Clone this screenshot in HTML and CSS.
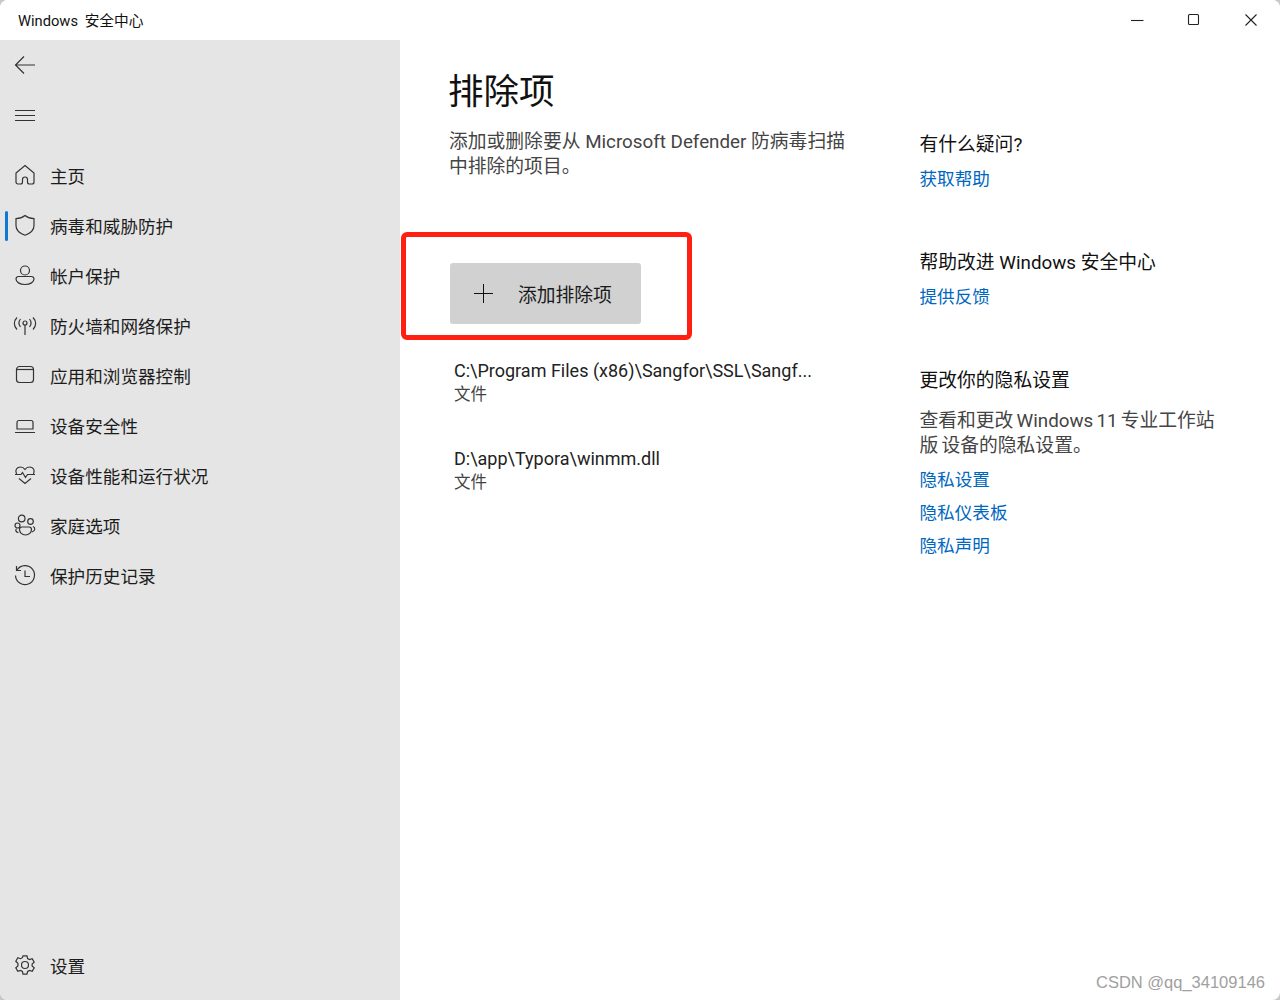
FILE: index.html
```html
<!DOCTYPE html>
<html lang="zh-CN">
<head>
<meta charset="utf-8">
<title>Windows 安全中心</title>
<link rel="stylesheet" href="styles.css">
</head>
<body>
<div class="window">
  <header class="titlebar">
    <span class="title">Windows 安全中心</span>
    <div class="controls">
      <svg class="ctl" viewBox="0 0 16 16"><path d="M2 8.500h12.500"/></svg>
      <svg class="ctl" viewBox="0 0 16 16"><rect x="2.500" y="2.500" width="10" height="10" rx="1"/></svg>
      <svg class="ctl" viewBox="0 0 16 16"><path d="M2.500 2.500l11 11M13.500 2.500l-11 11"/></svg>
    </div>
  </header>
  <div class="content">
    <nav class="sidebar">
      <div class="nav-tool"><svg class="ico" viewBox="0 0 24 24"><path d="M2.500 12h19.500M11 3.500L2.500 12l8.500 8.500"/></svg></div>
      <div class="nav-tool"><svg class="ico" viewBox="0 0 24 24"><path d="M2 7.500h20M2 12.500h20M2 17.500h20"/></svg></div>
      <ul class="nav-list">
        <li class="nav-item"><svg class="ico" viewBox="0 0 24 24"><path d="M12 1.500L21 9v9a2 2 0 0 1-2 2h-2.500a2 2 0 0 1-2-2v-2.500a2.500 2.500 0 0 0-5 0V18a2 2 0 0 1-2 2H5a2 2 0 0 1-2-2V9z"/></svg><span>主页</span></li>
        <li class="nav-item active"><svg class="ico" viewBox="0 0 24 24"><path d="M12 1.500c2.500 2 6 3.200 9 3.200v7c0 4.500-3.500 7.500-9 9.500-5.500-2-9-5-9-9.500v-7c3 0 6.500-1.200 9-3.200z"/></svg><span>病毒和威胁防护</span></li>
        <li class="nav-item"><svg class="ico" viewBox="0 0 24 24"><circle cx="12" cy="6.500" r="4.500"/><path d="M5.500 12.500h13a2.500 2.500 0 0 1 2.500 2.500c0 3-3.500 5.500-9 5.500S3 18 3 15a2.500 2.500 0 0 1 2.500-2.500z"/></svg><span>帐户保护</span></li>
        <li class="nav-item"><svg class="ico" viewBox="0 0 24 24"><circle cx="12" cy="9" r="2"/><path d="M12 11v10M7.500 5c-2 2.500-2 5.500 0 8M16.500 5c2 2.500 2 5.500 0 8M4 3.500c-3.500 3.500-3.500 8.500 0 12M20 3.500c3.500 3.500 3.500 8.500 0 12"/></svg><span>防火墙和网络保护</span></li>
        <li class="nav-item"><svg class="ico" viewBox="0 0 24 24"><rect x="3.500" y="2.500" width="17" height="16" rx="3"/><path d="M3.500 5.500h17"/></svg><span>应用和浏览器控制</span></li>
        <li class="nav-item"><svg class="ico" viewBox="0 0 24 24"><path d="M6 6.500h12a2 2 0 0 1 2 2V15H4V8.500a2 2 0 0 1 2-2zM2 18.500h20"/></svg><span>设备安全性</span></li>
        <li class="nav-item"><svg class="ico" viewBox="0 0 24 24"><path d="M3.500 10C1.500 6 4 3 7.500 3c2 0 3.500 1 4.500 2.500C13 4 14.500 3 16.500 3c3.500 0 6 3 4 7M2 10.500h6l1.500-2 3 5 2-3H22M6 14.500l6 5 6-5"/></svg><span>设备性能和运行状况</span></li>
        <li class="nav-item"><svg class="ico" viewBox="0 0 24 24"><circle cx="8.700" cy="4.500" r="3.300"/><circle cx="17.500" cy="7.500" r="2.800"/><circle cx="4.500" cy="11.500" r="2.500"/><path d="M9 13h7a2.500 2.500 0 0 1 2.500 2.500c0 3-2.500 5.500-6 5.500s-6-2.500-6-5.500A2.500 2.500 0 0 1 9 13zM3.500 15c-1.500 1-.5 3.500 2 3.500M20 12.500c2.500 1 2.500 4.500-1 5.500"/></svg><span>家庭选项</span></li>
        <li class="nav-item"><svg class="ico" viewBox="0 0 24 24"><path d="M4 6a9.500 9.500 0 1 1-1.500 5.500M3.500 2v4.500H8M12 6.500v6h5"/></svg><span>保护历史记录</span></li>
      </ul>
      <div class="nav-bottom">
        <div class="nav-item"><svg class="ico" viewBox="0 0 24 24"><circle cx="12" cy="11" r="3.500"/><path d="M10 1.800h4l.6 2.800 1.900 1 2.700-.9 2 3.500-2.100 1.900v1.800l2.100 1.900-2 3.500-2.700-.9-1.900 1-.6 2.800h-4l-.6-2.800-1.900-1-2.700.9-2-3.500 2.100-1.900V9.200L2.800 7.300l2-3.500 2.700.9 1.900-1z"/></svg><span>设置</span></div>
      </div>
    </nav>
    <main class="main">
      <section class="primary">
        <h1 class="page-title">排除项</h1>
        <p class="desc">添加或删除要从 Microsoft Defender 防病毒扫描中排除的项目。</p>
        <div class="add-wrap">
          <button class="add-btn"><svg class="plus" viewBox="0 0 20 20"><path d="M9.500 0v19M0 9.500h19"/></svg><span>添加排除项</span></button>
          <div class="highlight"></div>
        </div>
        <div class="entry entry-first"><div class="entry-path">C:\Program Files (x86)\Sangfor\SSL\Sangf...</div><div class="entry-type">文件</div></div>
        <div class="entry"><div class="entry-path">D:\app\Typora\winmm.dll</div><div class="entry-type">文件</div></div>
      </section>
      <aside class="side">
        <div class="side-block"><h2>有什么疑问?</h2><a>获取帮助</a></div>
        <div class="side-block"><h2>帮助改进 Windows 安全中心</h2><a>提供反馈</a></div>
        <div class="side-block"><h2>更改你的隐私设置</h2><p>查看和更改 Windows 11 专业工作站版 设备的隐私设置。</p><a>隐私设置</a><a>隐私仪表板</a><a>隐私声明</a></div>
      </aside>
    </main>
  </div>
  <div class="watermark">CSDN @qq_34109146</div>
</div>
</body>
</html>
```
FILE: styles.css
```css
* { box-sizing: border-box; }
html, body { margin: 0; height: 100%; background: #c8c8c8; }
body { font-family: Roboto, "Noto Sans CJK SC", sans-serif; color: #1a1a1a; overflow: hidden; }
.window { position: relative; width: 1280px; height: 1000px; background: #fff; border-radius: 8px; overflow: hidden; display: flex; flex-direction: column; }
.titlebar { height: 40px; display: flex; align-items: center; justify-content: space-between; background: #fff; }
.title { margin: -2px 0 0 18px; font-size: 14.700px; word-spacing: 3px; color: #111; }
.controls { display: flex; gap: 41px; padding-right: 21px; }
.ctl { width: 16px; height: 16px; fill: none; stroke: #222; stroke-width: 1.100; margin-top: -1px; }
.content { flex: 1; display: flex; min-height: 0; }
.sidebar { width: 400px; background: #e5e5e5; display: flex; flex-direction: column; }
.ico { width: 24px; height: 24px; fill: none; stroke: #333; stroke-width: 1.200; flex: none; }
.nav-tool { height: 50px; display: flex; align-items: center; padding-left: 13px; }
.nav-list { list-style: none; margin: 11px 0 0; padding: 0; }
.nav-item { position: relative; height: 50px; display: flex; align-items: center; gap: 13px; padding-left: 13px; font-size: 17.600px; color: #1c1c1c; }
.nav-item span { position: relative; top: -1px; }
.nav-item.active::before { content: ""; position: absolute; left: 5px; top: 10px; width: 3px; height: 30px; border-radius: 2px; background: #0f78d4; }
.nav-bottom { margin-top: auto; padding-bottom: 9px; }
.main { flex: 1; display: flex; min-width: 0; }
.primary { width: 471px; padding: 26px 0 0 49px; }
.page-title { margin: 0 0 0 -1px; font-size: 35.500px; font-weight: 400; line-height: 52px; color: #111; }
.desc { margin: 12px 0 0; width: 400px; font-size: 18.800px; line-height: 25px; color: #444; }
.add-wrap { position: relative; margin-top: 83px; height: 61px; }
.add-btn { width: 191px; height: 61px; margin-left: 1px; display: flex; align-items: center; padding: 0 0 0 24px; border: 0; border-radius: 3px; background: #d1d1d1; font: inherit; font-size: 18.800px; color: #1a1a1a; }
.plus { width: 20px; height: 20px; fill: none; stroke: #111; stroke-width: 1; margin-right: 24px; }
.highlight { position: absolute; left: -48px; top: -31px; width: 291px; height: 108px; border: 5px solid #ff2012; border-radius: 6px; }
.entry { margin-left: 5px; }
.entry-first { margin-top: 34px; }
.entry + .entry { margin-top: 40px; }
.entry-path { font-size: 18px; line-height: 25px; color: #222; white-space: nowrap; }
.entry-type { margin-top: 1px; font-size: 16.500px; line-height: 22px; color: #444; }
.side { flex: 1; padding: 93px 0 0 48.500px; }
.side-block { margin-bottom: 60px; width: 300px; }
.side-block h2 { margin: 0; font-size: 18.800px; font-weight: 400; line-height: 25px; color: #111; white-space: nowrap; }
.side-block p { margin: 15px 0 0; font-size: 18.800px; line-height: 25px; word-spacing: -1.500px; color: #444; }
.side-block a { display: block; margin-top: 10px; font-size: 17.600px; line-height: 23px; color: #0067c0; }
.watermark { position: absolute; right: 15px; bottom: 8px; font-family: "Liberation Sans", sans-serif; font-size: 16.500px; line-height: 20px; color: #a0a0a0; }
```
